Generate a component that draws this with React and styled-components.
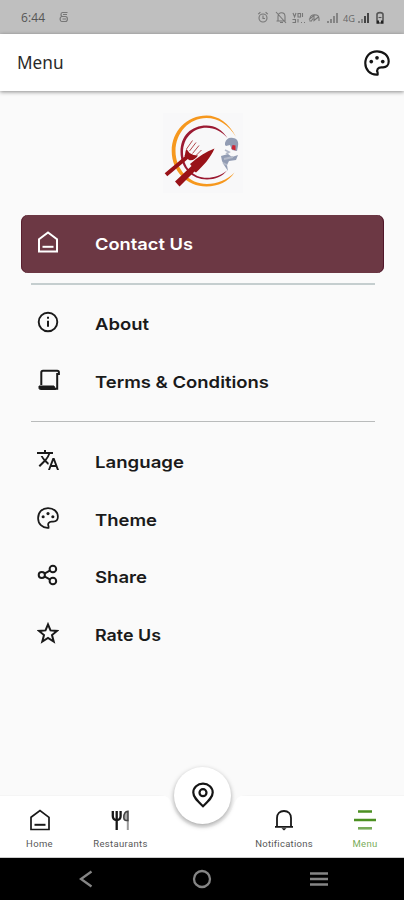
import styled, { createGlobalStyle } from "styled-components";
import { MdTranslate } from "react-icons/md";

const GlobalStyle = createGlobalStyle`
  * {
    box-sizing: border-box;
  }

  body {
    margin: 0;
    background: #fafafa;
    font-family: "Open Sans", "Noto Sans", sans-serif;
  }
`;

function PaletteIcon({ size, stroke = 2 }) {
  return (
    <svg width={size} height={size} viewBox="0 0 24 24" fill="none">
      <path
        d="M12 1.2C5.5 1.2 1.2 5.8 1.2 12.3 1.2 18.5 5.8 22.8 11.4 22.8h1.2V21c-1.3-2.6.4-5 3.4-5h1.6c3.2 0 5.2-2.2 5.2-5.3C22.8 5 18 1.2 12 1.2z"
        stroke="currentColor"
        strokeWidth={stroke}
        strokeLinejoin="round"
      />
      <g fill="currentColor">
        <circle cx="6.7" cy="10.7" r="1.7" />
        <circle cx="12" cy="7.2" r="1.7" />
        <circle cx="17.3" cy="10.7" r="1.7" />
      </g>
    </svg>
  );
}

function HomeIcon({ size = 22, stroke = 2 }) {
  return (
    <svg width={size} height={size} viewBox="0 0 22 22" fill="none" stroke="currentColor">
      <path d="M2 8.3 11 1.5l9 6.8v12.2H2z" strokeWidth={stroke} />
      <path d="M5.5 15.8h11" strokeWidth="2" />
    </svg>
  );
}

function InfoIcon() {
  return (
    <svg width="22" height="22" viewBox="0 0 22 22" fill="none" stroke="currentColor">
      <circle cx="11" cy="11" r="9.3" strokeWidth="1.9" />
      <path d="M11 9.8v6M11 5.8v2" strokeWidth="2" />
    </svg>
  );
}

function ScrollIcon() {
  return (
    <svg width="23" height="22" viewBox="0 0 23 22" fill="none" stroke="currentColor">
      <path d="M4.3 16V3.5c0-1 .6-1.7 1.7-1.7h14.3c1 0 1.6.7 1.6 1.8V5h-1.700v14.700H18" strokeWidth="2" />
      <path d="M2 17h15l1.5 3.5h-15c-1 0-1.5-.6-1.5-1.5z" fill="currentColor" strokeWidth="1" />
    </svg>
  );
}

function ShareIcon() {
  return (
    <svg width="22" height="22" viewBox="0 0 22 22" fill="none" stroke="currentColor" strokeWidth="2">
      <circle cx="4.8" cy="11" r="3.1" />
      <circle cx="15.9" cy="5" r="3.3" />
      <circle cx="15.9" cy="17" r="3.3" />
      <path d="m7.4 9.6 5.4-3M7.4 12.4l5.4 3" />
    </svg>
  );
}

function StarIcon() {
  return (
    <svg width="22" height="22" viewBox="0 0 22 22" fill="none" stroke="currentColor" strokeWidth="2">
      <path d="m11 2.4 2.5 6 6.5.5-5 4.2 1.7 6.5L11 16l-5.7 3.6L7 13.1 2 8.9l6.5-.5z" />
    </svg>
  );
}

function RestaurantIcon() {
  return (
    <svg width="20" height="22" viewBox="0 0 20 22" fill="none" stroke="currentColor">
      <path d="M1.8 2v5c0 3 1.5 4 3.9 4s3.9-1 3.9-4V2M5.7 2v19" strokeWidth="2.3" />
      <path d="M16.8 11.5V21" stroke="#999" strokeWidth="2" />
      <path d="M17 2.3c-3 .3-4.2 3.2-4.2 6.2 0 2 .9 3 2.6 3H17z" fill="#aaa" stroke="#444" strokeWidth="1.5" />
    </svg>
  );
}

function BellIcon() {
  return (
    <svg width="20" height="22" viewBox="0 0 20 22" fill="none" stroke="currentColor">
      <path d="M1 17.8h18M3 17.5V9c0-4.4 2.8-7 7-7s7 2.6 7 7v8.5" strokeWidth="1.8" />
      <path d="M7.5 19.2h5L10 21.5z" fill="currentColor" stroke="none" />
    </svg>
  );
}

function MenuIcon() {
  return (
    <svg width="22" height="22" viewBox="0 0 22 22" stroke="currentColor" strokeWidth="2.6">
      <path d="M4 2.5h14M0 11h22" />
      <path d="M4 19.3h14" opacity=".75" />
    </svg>
  );
}

function PinIcon() {
  return (
    <svg width="24" height="28" viewBox="0 0 24 28" fill="none" stroke="currentColor" strokeWidth="2.2">
      <path d="M12 25.3C7 20.5 2.3 16.5 2.3 11.6 2.3 6.6 6.5 2.7 12 2.7s9.7 3.9 9.7 8.9c0 4.9-4.7 8.9-9.7 13.7z" />
      <circle cx="12" cy="11.7" r="3.5" />
    </svg>
  );
}

function StatusIcons() {
  return (
    <svg width="130" height="16" viewBox="0 0 130 16" fill="none" stroke="#777" strokeWidth="1.1">
      <circle cx="6" cy="8" r="4" />
      <path d="M6 5.5v3h2M1.2 4.1 3.4 2.3M10.8 4.1 8.6 2.3" />
      <path d="M21 11V6.5c0-5 7-5 7 0V11H19.5M23 12.5h3M19 2l10 11" />
      <path d="M36 3l1.6 4L39 3M41 7V3.5h2.5V7zM45.5 3v4M35.5 9.5h3v3h-3M41 12.5V9M44 12.5h1M47 12.5h1" />
      <path d="M53 11.5v-3c0-5 9-5 9 0V11M52 9.5l5-4v5l5-4M54 11.5l2-3" />
      <g fill="#858585" stroke="none">
        <path d="M70 11h2v2h-2zM73 9h2v4h-2zM76 6h2v7h-2zM79 3h2v10h-2z" />
        <text x="86" y="12" fill="#666" fontSize="9.5" textLength="12" lengthAdjust="spacingAndGlyphs">
          4G
        </text>
        <path d="M101 11h2v2h-2zM104 9h2v4h-2z" />
        <path d="M107 6h2v7h-2zM110 3h2v10h-2z" fill="#444" />
      </g>
      <path d="M120 4.5c0-2.5 6-2.5 6 0V13h-6z" stroke="#555" strokeWidth="1.6" />
      <path d="M121.5 7.5h3" stroke="#555" />
      <path d="M120 10.5h2v3h-2zM124 10.5h2v3h-2z" fill="#222" stroke="none" />
    </svg>
  );
}

function Logo() {
  return (
    <LogoBox>
      <svg width="80" height="80" viewBox="0 0 80 80" fill="none">
        <path
          d="M73 24C66 10 55 2.5 43.5 2.5 24 2.5 8.7 18 8.7 38c0 20 15 35.5 34.8 35.5 11.5 0 22-5 28-14C64 67 54 71 44 71 26 71 12.5 56 12.5 38S26 5 43.5 5C55 5 66 12 73 24z"
          fill="#f6981e"
        />
        <path
          d="M64.5 25C59.5 17 52 12.5 43.5 12.5 28 12.5 17.5 23 17.5 39S29 66.500 44 66.500c8 0 15.500-3 20-9-6 5-13 7.300-20 7.300C30 64.800 20 54 20 39.500 20 25 30 14.700 43.500 14.700c8 0 15.500 3.800 21 10.300z"
          fill="#9b1a32"
        />
        <path d="m4.500 60.500 19-16" stroke="#991218" strokeWidth="4" strokeLinecap="square" />
        <path d="M21.500 43c1-2 .5-4.500 2-7l3 4 4 2 4.500.5c-2.500 4-6 5.500-9 4.500z" fill="#991218" />
        <path d="m23.500 36 6-8.500M26.500 38l6.500-8.500M29.500 40.500l6.500-8M32.500 43l6-6" stroke="#b44a4d" strokeWidth="1" />
        <path d="M51.500 35.500C43 38.500 35 44 27 51l1.500 2L12 68.500l4.500 5L31.500 58.500l1.500 1C40 53 47.500 45 51.500 35.500z" fill="#991218" />
        <path
          d="M62 30c1-4 4-6 8-5 4 0 6 4 5 8l-1 5-5-1-2-5-4 1-1-1zM58 43l7-2 4 3 6-2-2 5-7 1-2 4 1 6-4-6-2-4z"
          fill="#929cb3"
        />
        <path d="m62 37 4 2-3 2M61 46l9-2M60 50l4 2" stroke="#b4bac9" strokeWidth="1.8" />
        <path d="m69.5 32 3 .5v5l-4-1.5z" fill="#cc2635" />
      </svg>
    </LogoBox>
  );
}

const infoItems = [
  { label: "About", icon: <InfoIcon />, width: 54 },
  { label: "Terms & Conditions", icon: <ScrollIcon />, width: 174 },
];

const settingItems = [
  { label: "Language", icon: <MdTranslate size={24} />, width: 89 },
  { label: "Theme", icon: <PaletteIcon size={22} stroke={1.9} />, width: 62 },
  { label: "Share", icon: <ShareIcon />, width: 52 },
  { label: "Rate Us", icon: <StarIcon />, width: 66 },
];

function MenuItem({ label, icon, width, active }) {
  return (
    <MenuRow $active={active}>
      <MenuRowIcon>{icon}</MenuRowIcon>
      <MenuRowLabel width={width + 4} height="30">
        <text x="0" y="21" textLength={width} lengthAdjust="spacingAndGlyphs">
          {label}
        </text>
      </MenuRowLabel>
    </MenuRow>
  );
}

export default function App() {
  return (
    <Screen>
      <GlobalStyle />
      <StatusBar>
        <StatusTime>6:44</StatusTime>
        <svg width="10" height="14" viewBox="0 0 10 14" fill="none" stroke="#777" strokeWidth="1.2">
          <path d="M8.5 1.500h-5c-2 0-2 4 0 4h3c2.500 0 2.500 5 0 5H3c-2.500 0-2.500-5 0-5M3.500 8h3.500M4 3.500h4" />
        </svg>
        <StatusRight>
          <StatusIcons />
        </StatusRight>
      </StatusBar>
      <Header>
        <HeaderTitle>Menu</HeaderTitle>
        <PaletteIcon size={26} />
      </Header>
      <Content>
        <Logo />
        <MenuItem label="Contact Us" icon={<HomeIcon />} width={98} active />
        <Divider $tint="#c5cecf" />
        <MenuGroup>
          {infoItems.map((item) => (
            <MenuItem key={item.label} {...item} />
          ))}
        </MenuGroup>
        <Divider $tint="#b9bbbb" />
        <MenuGroup>
          {settingItems.map((item) => (
            <MenuItem key={item.label} {...item} />
          ))}
        </MenuGroup>
      </Content>
      <TabBar>
        <Tab $width={79}>
          <HomeIcon stroke={1.7} />
          <TabLabel>Home</TabLabel>
        </Tab>
        <Tab $width={83}>
          <RestaurantIcon />
          <TabLabel>Restaurants</TabLabel>
        </Tab>
        <TabGap />
        <Tab $width={84}>
          <BellIcon />
          <TabLabel $spacing="0.25px">Notifications</TabLabel>
        </Tab>
        <Tab $width={78} $active>
          <MenuIcon />
          <TabLabel>Menu</TabLabel>
        </Tab>
        <Notch width="90" height="36" viewBox="0 0 90 36">
          <path d="M0 0c8 0 12 3 14 9 4 14 16 24 31 24s27-10 31-24c2-6 6-9 14-9z" fill="#fafafa" />
        </Notch>
        <PinButton>
          <PinIcon />
        </PinButton>
      </TabBar>
      <SystemBar>
        <svg width="14" height="18" viewBox="0 0 14 18" fill="none" stroke="#858585" strokeWidth="2.3">
          <path d="M12.5 1.5 2 9l10.5 7.5" />
        </svg>
        <svg width="20" height="20" viewBox="0 0 20 20" fill="none" stroke="#858585" strokeWidth="2.3">
          <circle cx="10" cy="10" r="8" />
        </svg>
        <svg width="18" height="16" viewBox="0 0 18 16" stroke="#858585" strokeWidth="2.6">
          <path d="M0 2.5h18M0 8h18M0 13.5h18" />
        </svg>
      </SystemBar>
    </Screen>
  );
}

const Screen = styled.div`
  display: flex;
  flex-direction: column;
  width: 404px;
  height: 900px;
  overflow: hidden;
  background: #fafafa;
  color: #151515;
`;

const StatusBar = styled.div`
  display: flex;
  align-items: center;
  flex: 0 0 34px;
  padding: 1px 17px 0 21px;
  background: #bfbfbf;
`;

const StatusTime = styled.span`
  width: 38px;
  font-size: 12px;
  letter-spacing: 0.1px;
  color: #555;
`;

const StatusRight = styled.div`
  display: flex;
  margin-left: auto;
`;

const Header = styled.header`
  display: flex;
  align-items: center;
  justify-content: space-between;
  flex: 0 0 57px;
  padding: 0 14px 0 17px;
  background: #fff;
  box-shadow: 0 1px 4px rgba(0, 0, 0, 0.45);
`;

const HeaderTitle = styled.h1`
  margin: 0;
  font-family: "Noto Sans", sans-serif;
  font-size: 17.2px;
  font-weight: 400;
  color: #292929;
`;

const Content = styled.main`
  display: flex;
  flex-direction: column;
  flex: 1;
  padding: 22px 20px 0 21px;
`;

const LogoBox = styled.div`
  display: flex;
  align-self: center;
  width: 80px;
  height: 80px;
  margin: 0 0 22px 1px;
  background: #f8f8f9;
`;

const MenuRow = styled.div`
  display: flex;
  align-items: center;
  flex: 0 0 57.7px;
  padding-left: 15px;
  border-radius: 7px;
  background: ${({ $active }) => ($active ? "#6c3844" : "transparent")};
  box-shadow: ${({ $active }) => ($active ? "inset -1px 0 #50172a, inset 1px 0 #5a2030" : "none")};
  color: ${({ $active }) => ($active ? "#fff" : "#1a1a1a")};
`;

const MenuRowIcon = styled.div`
  display: flex;
  justify-content: center;
  width: 24px;
  margin: 0 35px 4px 0;
`;

const MenuRowLabel = styled.svg`
  fill: currentColor;
  font-family: Inter, sans-serif;
  font-size: 16.5px;
  font-weight: 600;
`;

const Divider = styled.div`
  flex: 0 0 2px;
  margin: 10px 9px 0 10px;
  background: ${({ $tint }) => $tint};
`;

const MenuGroup = styled.div`
  display: flex;
  flex-direction: column;
  padding-top: 10.8px;

  & + ${Divider} {
    flex-basis: 1.5px;
  }
`;

const TabBar = styled.nav`
  position: relative;
  display: flex;
  flex: 0 0 63px;
  background: #fff;
  border-bottom: 1px solid #ccc;
  border-top: 1px solid #f5f5f5;
`;

const Tab = styled.div`
  display: flex;
  flex-direction: column;
  align-items: center;
  gap: 6px;
  width: ${({ $width }) => $width}px;
  padding-top: 13px;
  color: ${({ $active }) => ($active ? "#4c9022" : "#181818")};
`;

const TabLabel = styled.span`
  font-family: Roboto, sans-serif;
  font-size: 9.5px;
  line-height: 13px;
  letter-spacing: ${({ $spacing }) => $spacing || "0.35px"};
  opacity: 0.75;
`;

const TabGap = styled.div`
  width: 80px;
`;

// cut-out in the bar behind the round button
const Notch = styled.svg`
  position: absolute;
  top: -1px;
  left: 157.5px;
`;

// sits on the top edge of the tab bar
const PinButton = styled.div`
  position: absolute;
  top: -29px;
  left: 174px;
  display: flex;
  align-items: center;
  justify-content: center;
  width: 57px;
  height: 57px;
  padding-bottom: 2px;
  border-radius: 50%;
  background: #fff;
  box-shadow: 0 2px 5px rgba(0, 0, 0, 0.35);
`;

const SystemBar = styled.footer`
  display: flex;
  align-items: center;
  justify-content: space-between;
  flex: 0 0 42px;
  padding: 0 76px 0 79px;
  background: #000;
`;
